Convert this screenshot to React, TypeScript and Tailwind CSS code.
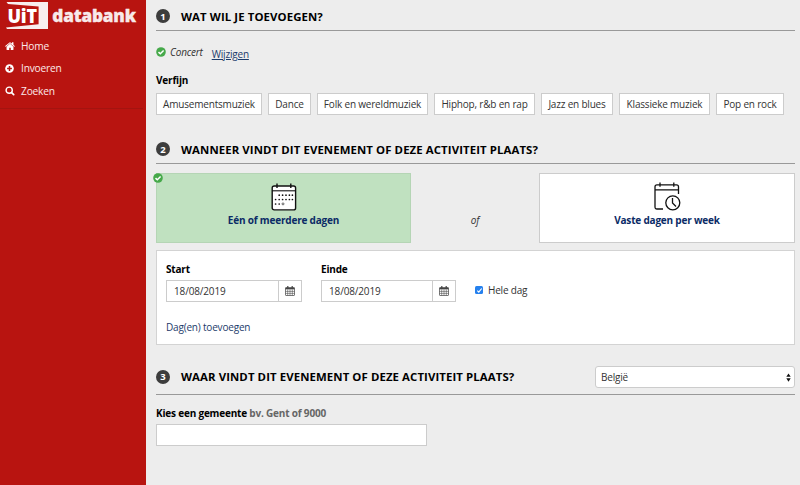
import React from "react";

function CheckBadge() {
  return (
    <svg className="block h-[10px] w-[10px] shrink-0" viewBox="0 0 10 10">
      <circle cx="5" cy="5" r="4.8" fill="#46a94a" />
      <path d="M2.5 5.1 4.3 6.8 7.6 3.5" fill="none" stroke="#fff" strokeWidth="1.5" />
    </svg>
  );
}

function Logo() {
  return (
    <div className="flex h-[30px] items-start pl-[6px] pt-[2px]">
      <svg className="block h-[28px] w-[132px]" viewBox="0 0 132 28">
        <path d="M.5 0H42V27H1L0 25.6 32.6 22.3V4.4L2 2Z" fill="#f8eeee" />
        <text x="1.4" y="20.6" fontFamily="'Open Sans', sans-serif" fontWeight="800" fontSize="19.5" textLength="29.5" lengthAdjust="spacingAndGlyphs" fill="#fff">UiT</text>
        <text x="46.3" y="20" fontFamily="'Open Sans', sans-serif" fontWeight="800" fontSize="17.3" textLength="83.5" lengthAdjust="spacingAndGlyphs" fill="#f8e9e9" stroke="#f8e9e9" strokeWidth=".35">databank</text>
      </svg>
    </div>
  );
}

function HomeIcon() {
  return (
    <svg className="block h-[8px] w-[10px]" viewBox="0 0 1664 1312" fill="#fff">
      <path d="M1408 768v480q0 26-19 45t-45 19h-384v-384h-256v384h-384q-26 0-45-19t-19-45v-480q0-1 .5-3t.5-3l575-474 575 474q1 2 1 6zm223-69l-62 74q-8 9-21 11h-3q-13 0-21-7l-692-577-692 577q-12 8-24 7-13-2-21-11l-62-74q-8-10-7-23.5t11-21.5l719-599q32-26 76-26t76 26l244 204v-195q0-14 9-23t23-9h192q14 0 23 9t9 23v408l219 182q10 8 11 21.5t-7 23.5z" />
    </svg>
  );
}

function PlusCircle() {
  return (
    <svg className="block h-[9px] w-[9px]" viewBox="0 0 9 9">
      <circle cx="4.5" cy="4.5" r="4.3" fill="#fff" />
      <path d="M4.5 2.1V6.9M2.1 4.5H6.9" stroke="#b81410" strokeWidth="1.5" />
    </svg>
  );
}

function SearchIcon() {
  return (
    <svg className="block h-[10px] w-[10px]" viewBox="0 0 10 10" fill="none" stroke="#fff">
      <circle cx="4.2" cy="4.2" r="3.1" strokeWidth="1.4" />
      <path d="M6.6 6.6 8.7 8.7" strokeWidth="1.7" strokeLinecap="round" />
    </svg>
  );
}

function NavItem({ icon, label }: { icon: React.ReactNode; label: string }) {
  return (
    <a className="flex h-[22.5px] items-center text-[10.2px] tracking-[-0.2px] text-[#fbe9e9]">
      <span className="flex w-[16.5px] items-center text-white">{icon}</span>
      {label}
    </a>
  );
}

function Heading({ n, children }: { n: number; children: React.ReactNode }) {
  return (
    <h2 className="flex items-center text-[11.4px] font-bold tracking-[0.09px] text-black">
      <span className="mr-[11px] flex h-[14px] w-[14px] items-center justify-center rounded-full bg-[#3d3d3d] text-[9.5px] leading-none tracking-normal text-white">
        {n}
      </span>
      {children}
    </h2>
  );
}

function DotCalendar() {
  const dots = [
    [8.2, 12.2], [11.6, 12.2], [15, 12.2], [18.4, 12.2], [21.4, 12.2],
    [4.6, 16.5], [8.2, 16.5], [11.6, 16.5], [15, 16.5], [18.4, 16.5], [21.4, 16.5],
    [4.6, 21], [8.2, 21],
  ];
  return (
    <svg className="block h-[28px] w-[26px]" viewBox="0 0 26 28">
      <rect x="1.2" y="3" width="23.4" height="23.9" rx="2" fill="#fff" stroke="#111" strokeWidth="1.4" />
      <path d="M1 7.8H25" stroke="#111" strokeWidth="1.1" />
      <path d="M6 .5V5M19.8 .5V5" stroke="#111" strokeWidth="1.4" />
      {dots.map(([x, y]) => <circle key={`${x}-${y}`} cx={x} cy={y} r=".85" fill="#111" />)}
      <circle cx="12" cy="20.9" r="1" fill="none" stroke="#111" strokeWidth=".6" />
    </svg>
  );
}

function ClockCalendar() {
  return (
    <svg className="block h-[29px] w-[27px]" viewBox="0 0 27 29" fill="none" stroke="#111" strokeWidth="1.3">
      <path d="M9 27H3Q1 27 1 25V4.8Q1 2.8 3 2.8H22.5Q24.5 2.8 24.5 4.8V12M1 7.8H24.5M6 .5V4.8M19.8 .5V4.8" />
      <circle cx="18.8" cy="20.8" r="7" />
      <path d="M18.5 16V21L22 24.5" />
    </svg>
  );
}

function GridCalendar() {
  return (
    <svg className="block h-[10px] w-[10px]" viewBox="0 0 10 10" fill="none" stroke="#444">
      <rect x=".5" y="1.6" width="9" height="7.9" rx=".5" strokeWidth=".7" />
      <path d="M.5 2.5H9.5" strokeWidth="1.7" />
      <path d="M2.7 3.5V9.5M5 3.5V9.5M7.3 3.5V9.5M.5 5.4H9.5M.5 7.4H9.5" strokeWidth=".55" />
      <path d="M2.8 0V2.3M7.2 0V2.3" strokeWidth="1.2" />
    </svg>
  );
}

function DateField({ label, className }: { label: string; className: string }) {
  return (
    <div className={className}>
      <div className="h-[14px] text-[10px] font-bold leading-[14px] text-black">{label}</div>
      <div className="mt-[4px] flex h-[22px] border border-[#ccc]">
        <div className="flex flex-1 items-center pl-[7px] text-[10px] tracking-[-0.15px]">18/08/2019</div>
        <div className="flex w-[23px] items-center justify-center border-l border-[#ccc]">
          <GridCalendar />
        </div>
      </div>
    </div>
  );
}

const genres = [
  { label: "Amusementsmuziek", width: "w-[106px]" },
  { label: "Dance", width: "w-[43px]" },
  { label: "Folk en wereldmuziek", width: "w-[111px]" },
  { label: "Hiphop, r&b en rap", width: "w-[101px]" },
  { label: "Jazz en blues", width: "w-[72px]" },
  { label: "Klassieke muziek", width: "w-[91px]" },
  { label: "Pop en rock", width: "w-[68px]" },
];

export default function App() {
  return (
    <div className="flex h-[485px] w-[800px] overflow-hidden bg-[#ededed] font-['Open_Sans',sans-serif] text-[10.2px] tracking-[-0.19px] text-[#333]">
      <aside className="h-full w-[146px] shrink-0 bg-[#b81410]">
        <Logo />
        <nav className="mr-[3px] flex h-[79px] flex-col border-b border-[#a41410] pl-[4.5px] pt-[5px]">
          <NavItem icon={<HomeIcon />} label="Home" />
          <NavItem icon={<PlusCircle />} label="Invoeren" />
          <NavItem icon={<SearchIcon />} label="Zoeken" />
        </nav>
      </aside>

      <main className="w-[649px] pl-[10px] pt-px">
        <section className="h-[133px]">
          <div className="flex h-[30px] items-center border-b border-[#999] pt-[2px]">
            <Heading n={1}>WAT WIL JE TOEVOEGEN?</Heading>
          </div>
          <div className="flex h-[42px] items-center gap-[4px] text-[10px]">
            <CheckBadge />
            <span className="mt-px italic">Concert</span>
            <a className="ml-[5px] mt-[4px] text-[#1c3b6b] underline">Wijzigen</a>
          </div>
          <div className="h-[20px] text-[10px] font-bold leading-[14px] text-black">Verfijn</div>
          <div className="flex gap-[6px]">
            {genres.map((g) => (
              <button key={g.label} className={`flex h-[22px] items-center justify-center whitespace-nowrap border border-[#ccc] bg-white text-[10px] ${g.width}`}>
                {g.label}
              </button>
            ))}
          </div>
        </section>

        <section className="h-[211px]">
          <div className="flex h-[30px] items-center border-b border-[#999] pt-[2px]">
            <Heading n={2}>WANNEER VINDT DIT EVENEMENT OF DEZE ACTIVITEIT PLAATS?</Heading>
          </div>
          <div className="mt-[9px] flex h-[70px]">
            <button className="relative flex w-[255px] flex-col items-center border border-[#b5d5b5] bg-[#c0e1c0] pt-[9px]">
              <span className="absolute left-[-4px] top-[-1px]"><CheckBadge /></span>
              <DotCalendar />
              <span className="mt-[2px] text-[10px] font-bold leading-[14px] text-[#0b2b66]">Eén of meerdere dagen</span>
            </button>
            <div className="flex w-[128px] items-center justify-center pt-[24px] text-[10px] italic">of</div>
            <button className="flex w-[256px] flex-col items-center border border-[#ccc] bg-white pt-[8px]">
              <ClockCalendar />
              <span className="mt-[2px] text-[10px] font-bold leading-[14px] text-[#0b2b66]">Vaste dagen per week</span>
            </button>
          </div>
          <div className="mt-[7px] h-[95px] border border-[#d3d3d3] bg-white pl-[9px] pt-[11px]">
            <div className="flex">
              <DateField label="Start" className="w-[136px]" />
              <DateField label="Einde" className="ml-[19px] w-[135px]" />
              <label className="ml-[19px] mt-[17px] flex h-[22px] items-center gap-[5px] text-[10px]">
                <span className="flex h-[8px] w-[8px] items-center justify-center rounded-[1.5px] bg-[#2681ee]">
                  <svg className="h-[7px] w-[7px]" viewBox="0 0 7 7"><path d="M1.3 3.6 2.8 5.2 5.7 1.5" fill="none" stroke="#fff" strokeWidth="1.2" /></svg>
                </span>
                Hele dag
              </label>
            </div>
            <a className="mt-[18px] block text-[10px] leading-[14px] text-[#1c3b6b]">Dag(en) toevoegen</a>
          </div>
        </section>

        <section>
          <div className="mt-[13px] flex h-[37px] items-center justify-between border-b border-[#999] pt-[2px]">
            <Heading n={3}>WAAR VINDT DIT EVENEMENT OF DEZE ACTIVITEIT PLAATS?</Heading>
            <div className="flex h-[22px] w-[200px] items-center justify-between rounded-[3px] border border-[#ccc] bg-white pl-[5px] pr-[3px] text-[10px]">
              België
              <svg className="h-[9px] w-[5px]" viewBox="0 0 5 9" fill="#111"><path d="M.3 3.8H4.7L2.5.4ZM.3 5.3H4.7L2.5 8.7Z" /></svg>
            </div>
          </div>
          <div className="mt-[11px] text-[10px] font-bold leading-[14px] text-black">
            Kies een gemeente <span className="text-[#666]">bv. Gent of 9000</span>
          </div>
          <div className="mt-[4px] h-[22px] w-[271px] border border-[#ccc] bg-white" />
        </section>
      </main>
    </div>
  );
}
